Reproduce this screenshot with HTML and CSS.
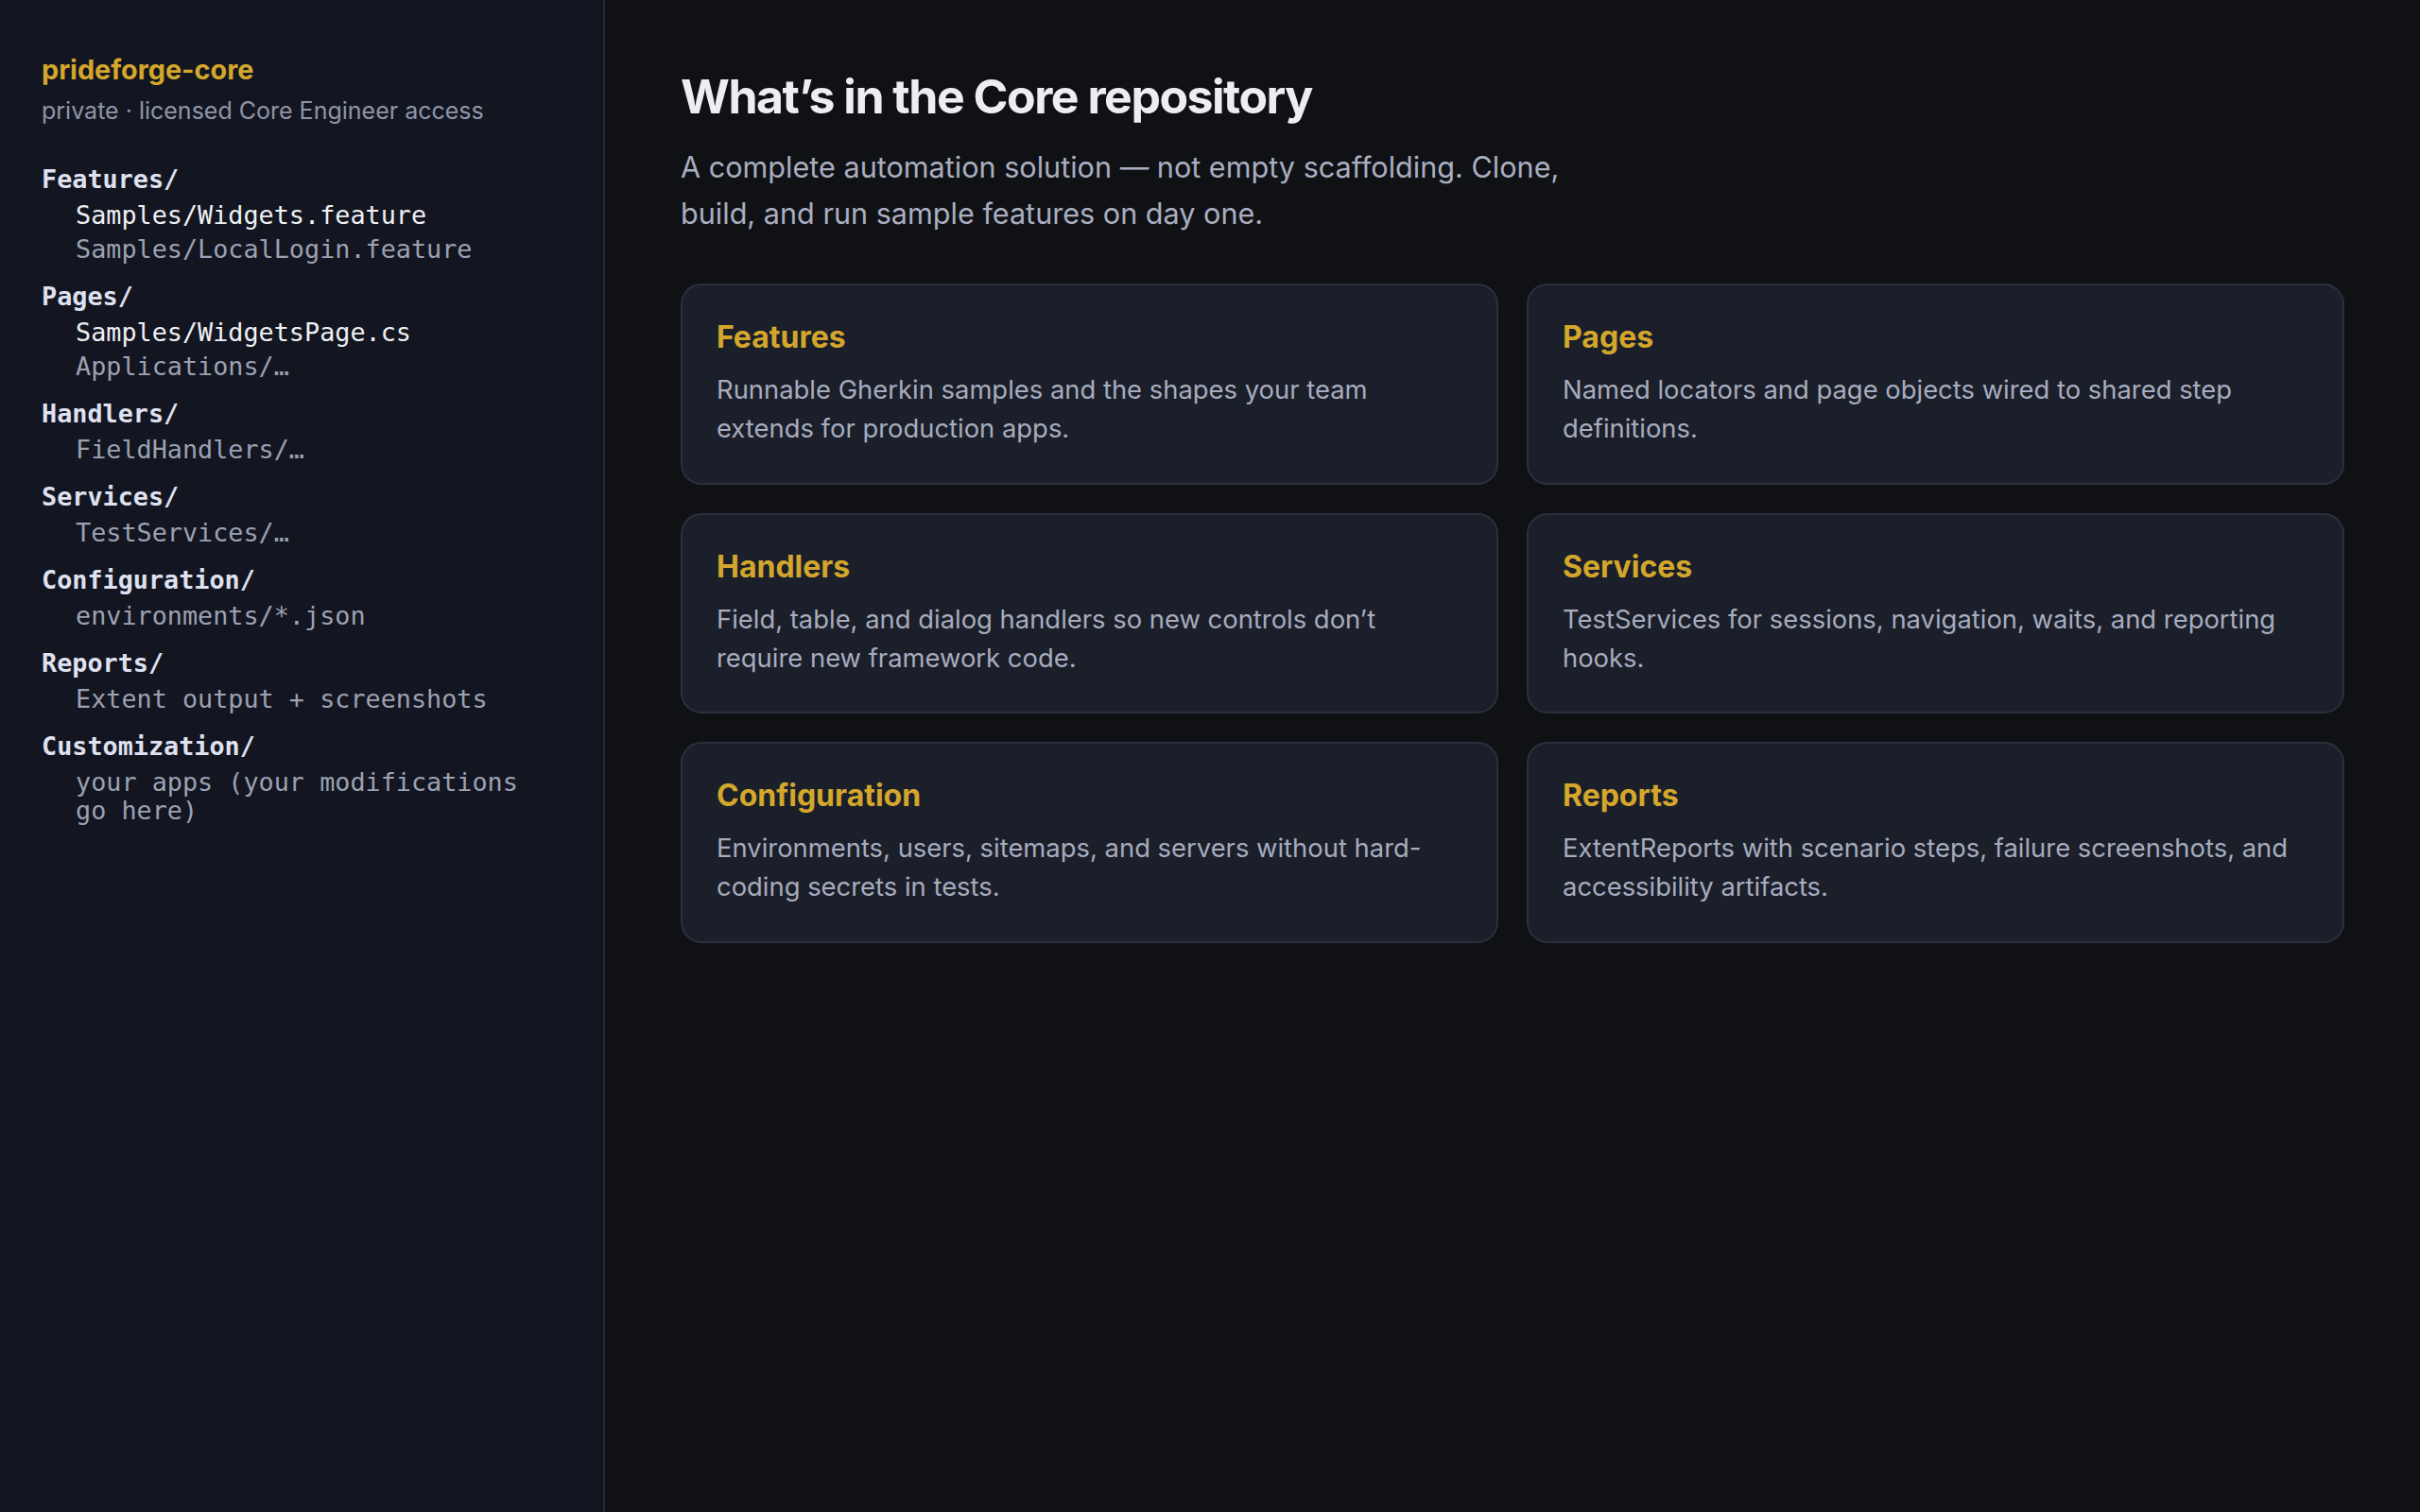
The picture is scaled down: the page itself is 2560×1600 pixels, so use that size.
FILE: index.html
```html
<!DOCTYPE html>
<html lang="en">
<head>
    <meta charset="UTF-8">
    <meta name="viewport" content="width=device-width, initial-scale=1.0">
    <title>prideforge-core</title>
    <link rel="stylesheet" href="styles.css">
</head>
<body>
    <div class="layout">
        <!-- Repository tree -->
        <aside class="sidebar">
            <div class="repo-name">prideforge-core</div>
            <div class="repo-access">private · licensed Core Engineer access</div>

            <div class="tree">
                <div class="tree-group">
                    <div class="tree-dir">Features/</div>
                    <ul class="tree-files">
                        <li class="active">Samples/Widgets.feature</li>
                        <li>Samples/LocalLogin.feature</li>
                    </ul>
                </div>
                <div class="tree-group">
                    <div class="tree-dir">Pages/</div>
                    <ul class="tree-files">
                        <li class="active">Samples/WidgetsPage.cs</li>
                        <li>Applications/…</li>
                    </ul>
                </div>
                <div class="tree-group">
                    <div class="tree-dir">Handlers/</div>
                    <ul class="tree-files">
                        <li>FieldHandlers/…</li>
                    </ul>
                </div>
                <div class="tree-group">
                    <div class="tree-dir">Services/</div>
                    <ul class="tree-files">
                        <li>TestServices/…</li>
                    </ul>
                </div>
                <div class="tree-group">
                    <div class="tree-dir">Configuration/</div>
                    <ul class="tree-files">
                        <li>environments/*.json</li>
                    </ul>
                </div>
                <div class="tree-group">
                    <div class="tree-dir">Reports/</div>
                    <ul class="tree-files">
                        <li>Extent output + screenshots</li>
                    </ul>
                </div>
                <div class="tree-group">
                    <div class="tree-dir">Customization/</div>
                    <ul class="tree-files">
                        <li>your apps (your modifications go here)</li>
                    </ul>
                </div>
            </div>
        </aside>

        <!-- Main Content -->
        <main class="content">
            <h1>What’s in the Core repository</h1>
            <p class="lead">A complete automation solution — not empty scaffolding. Clone, build, and run sample features on day one.</p>

            <div class="card-grid">
                <div class="card">
                    <h2>Features</h2>
                    <p>Runnable Gherkin samples and the shapes your team extends for production apps.</p>
                </div>
                <div class="card">
                    <h2>Pages</h2>
                    <p>Named locators and page objects wired to shared step definitions.</p>
                </div>
                <div class="card">
                    <h2>Handlers</h2>
                    <p>Field, table, and dialog handlers so new controls don’t require new framework code.</p>
                </div>
                <div class="card">
                    <h2>Services</h2>
                    <p>TestServices for sessions, navigation, waits, and reporting hooks.</p>
                </div>
                <div class="card">
                    <h2>Configuration</h2>
                    <p>Environments, users, sitemaps, and servers without hard-coding secrets in tests.</p>
                </div>
                <div class="card">
                    <h2>Reports</h2>
                    <p>ExtentReports with scenario steps, failure screenshots, and accessibility artifacts.</p>
                </div>
            </div>
        </main>
    </div>
</body>
</html>
```

FILE: styles.css
```css
* {
    margin: 0;
    padding: 0;
    box-sizing: border-box;
}

body {
    font-family: Inter, "Noto Sans", sans-serif;
    background-color: #101115;
    color: #eceef3;
}

.layout {
    display: flex;
    min-height: 100vh;
}

/* Sidebar */
.sidebar {
    width: 640px;
    flex-shrink: 0;
    background-color: #131620;
    border-right: 2px solid #262a35;
    padding: 56px 48px 40px 44px;
}

.repo-name {
    font-size: 28.8px;
    line-height: 36px;
    font-weight: 700;
    color: #d4a72c;
}

.repo-access {
    margin-top: 8px;
    font-size: 25px;
    line-height: 34px;
    color: #8f95a8;
}

.tree {
    margin-top: 41px;
    font-family: "DejaVu Sans Mono", monospace;
    font-size: 26.8px;
    line-height: 30px;
}

.tree-group + .tree-group {
    margin-top: 20px;
}

.tree-dir {
    font-weight: 700;
    color: #dfe1f1;
}

.tree-files {
    list-style: none;
    margin-top: 8px;
    padding-left: 36px;
    color: #9ba1b3;
}

.tree-files li + li {
    margin-top: 6px;
}

.tree-files li.active {
    color: #eff0f5;
}

/* Main Content */
.content {
    flex: 1;
    padding: 72px 80px 80px 80px;
}

.content h1 {
    font-size: 50px;
    line-height: 60px;
    font-weight: 700;
    letter-spacing: -0.03em;
    color: #eceef3;
}

.lead {
    margin-top: 21px;
    max-width: 960px;
    font-size: 30.6px;
    line-height: 48.6px;
    color: #a9aec0;
}

.card-grid {
    margin-top: 50px;
    display: grid;
    grid-template-columns: 1fr 1fr;
    gap: 30px;
}

.card {
    background-color: #1b1f2a;
    border: 2px solid #2b303d;
    border-radius: 22px;
    padding: 36px;
}

.card h2 {
    font-size: 32px;
    line-height: 37px;
    font-weight: 700;
    color: #d4a72c;
}

.card p {
    margin-top: 17px;
    font-size: 27.4px;
    line-height: 41.25px;
    color: #a7acbf;
}
```
